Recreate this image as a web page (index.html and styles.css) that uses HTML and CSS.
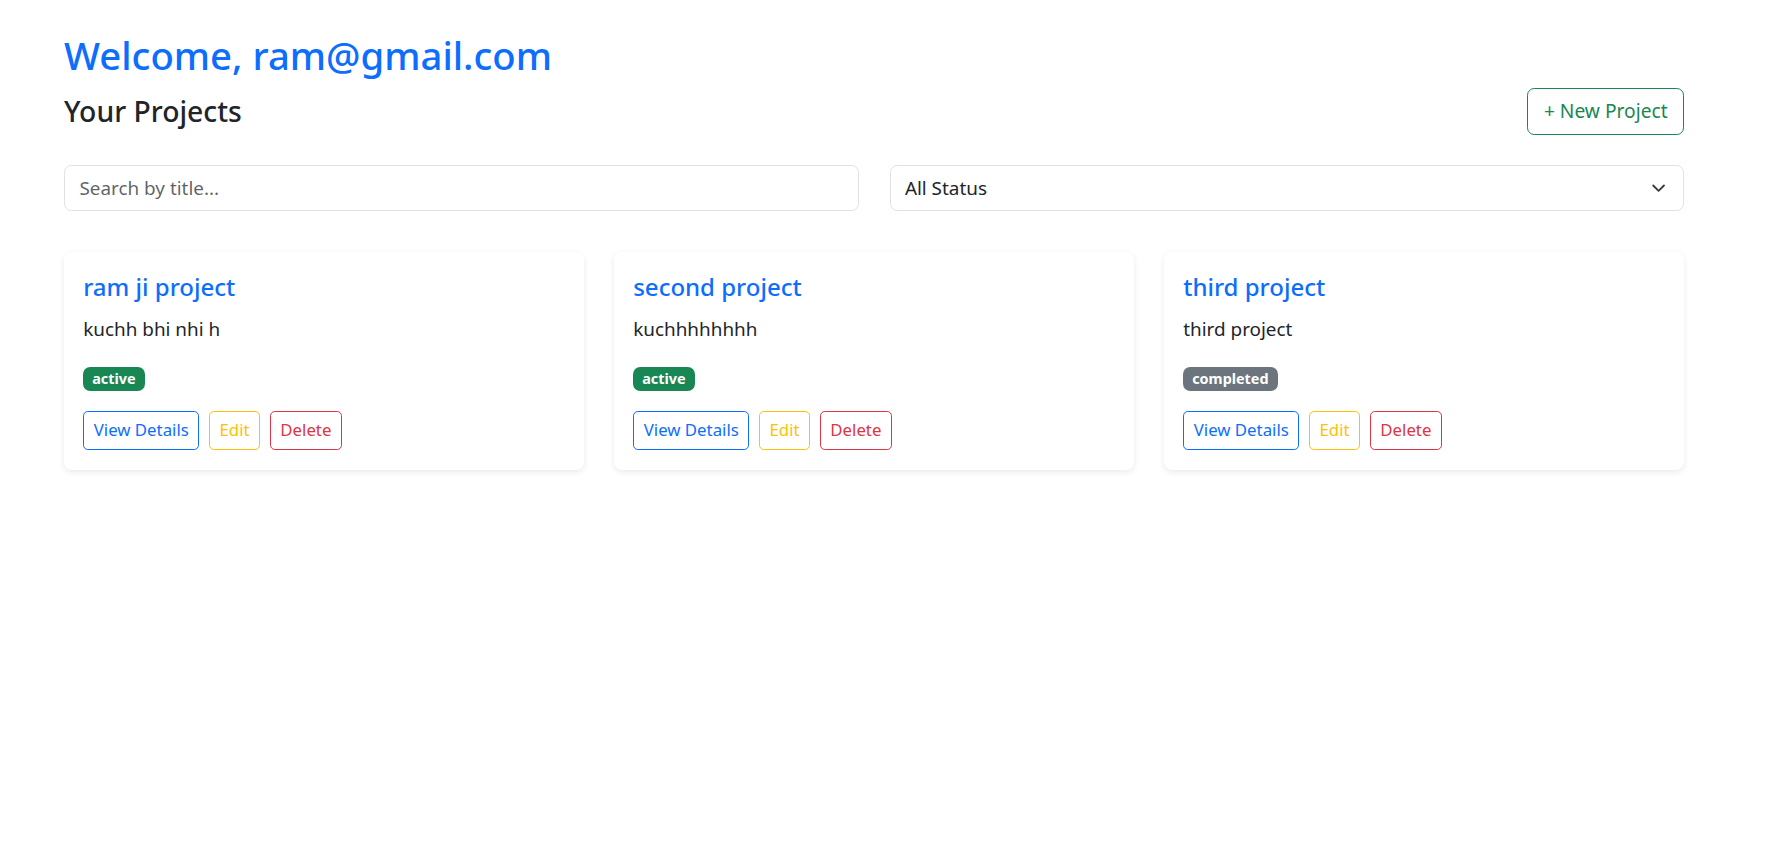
FILE: index.html
```html
<!DOCTYPE html>
<html lang="en">
<head>
<meta charset="utf-8">
<title>Projects</title>
<link rel="stylesheet" href="styles.css">
</head>
<body>
<main class="page">
  <h1 class="welcome">Welcome, ram@gmail.com</h1>
  <div class="header-row">
    <h2 class="section-title">Your Projects</h2>
    <button class="btn btn-outline-success" type="button">+ New Project</button>
  </div>
  <div class="filters">
    <input class="field" type="text" placeholder="Search by title...">
    <div class="select-wrap">
      <select class="field select"><option>All Status</option><option>active</option><option>completed</option></select>
      <svg class="chevron" viewBox="0 0 16 16" aria-hidden="true"><path d="m2 5 6 6 6-6" fill="none" stroke="#343a40" stroke-width="2" stroke-linecap="round" stroke-linejoin="round"/></svg>
    </div>
  </div>
  <div class="cards">
    <div class="card">
      <h5 class="card-title">ram ji project</h5>
      <p class="card-text">kuchh bhi nhi h</p>
      <div class="badge-line"><span class="badge badge-active">active</span></div>
      <div class="actions">
        <button class="btn-sm btn-primary-o" type="button">View Details</button>
        <button class="btn-sm btn-warning-o" type="button">Edit</button>
        <button class="btn-sm btn-danger-o" type="button">Delete</button>
      </div>
    </div>
    <div class="card">
      <h5 class="card-title">second project</h5>
      <p class="card-text">kuchhhhhhhh</p>
      <div class="badge-line"><span class="badge badge-active">active</span></div>
      <div class="actions">
        <button class="btn-sm btn-primary-o" type="button">View Details</button>
        <button class="btn-sm btn-warning-o" type="button">Edit</button>
        <button class="btn-sm btn-danger-o" type="button">Delete</button>
      </div>
    </div>
    <div class="card">
      <h5 class="card-title">third project</h5>
      <p class="card-text">third project</p>
      <div class="badge-line"><span class="badge badge-completed">completed</span></div>
      <div class="actions">
        <button class="btn-sm btn-primary-o" type="button">View Details</button>
        <button class="btn-sm btn-warning-o" type="button">Edit</button>
        <button class="btn-sm btn-danger-o" type="button">Delete</button>
      </div>
    </div>
  </div>
</main>
</body>
</html>
```

FILE: styles.css
```css
* { box-sizing: border-box; }

html, body {
  margin: 0;
  background: #fff;
}

body {
  font-family: "Noto Sans", "Open Sans", sans-serif;
  font-size: 18.9px;
  line-height: 28.8px;
  color: #212529;
}

.page {
  padding: 26.7px 93px 40px 64px;
}

.welcome {
  margin: 0 0 3.8px;
  font-size: 38.3px;
  font-weight: 500;
  line-height: 57.6px;
  color: #0d6efd;
}

.header-row {
  display: flex;
  justify-content: space-between;
  align-items: center;
  height: 46.5px;
}

.section-title {
  margin: 0;
  font-size: 28.3px;
  font-weight: 500;
  line-height: 34.6px;
  color: #212529;
}

.btn {
  font-family: inherit;
  font-size: 19.2px;
  line-height: 28.8px;
  padding: 7.9px 15.4px;
  border-radius: 7.2px;
  background: #fff;
  cursor: pointer;
}

.btn-outline-success {
  color: #198754;
  border: 1px solid #198754;
}

.filters {
  display: grid;
  grid-template-columns: 1fr 1fr;
  gap: 31px;
  margin-top: 30.6px;
}

.field {
  width: 100%;
  height: 45.4px;
  font-family: inherit;
  font-size: 18.9px;
  color: #212529;
  padding: 0 14.4px;
  border: 1px solid #dee2e6;
  border-radius: 7.2px;
  background: #fff;
  outline: none;
}

.field::placeholder {
  color: rgba(33, 37, 41, 0.72);
}

.select-wrap {
  position: relative;
}

.select {
  appearance: none;
  -webkit-appearance: none;
  padding-right: 48px;
}

.chevron {
  position: absolute;
  right: 15.4px;
  top: 15.5px;
  width: 19.2px;
  height: 14.4px;
  pointer-events: none;
}

.cards {
  display: grid;
  grid-template-columns: repeat(3, 1fr);
  gap: 30px;
  margin-top: 41.9px;
}

.card {
  background: #fff;
  border-radius: 8px;
  padding: 20.5px 19.2px 20.5px;
  box-shadow: 0 2px 6px rgba(0, 0, 0, 0.085);
}

.card-title {
  margin: 0 0 12.8px;
  font-size: 24px;
  font-weight: 500;
  line-height: 28.8px;
  color: #0d6efd;
}

.card-text {
  margin: 0 0 21.5px;
}

.badge-line {
  margin-bottom: 17.5px;
  height: 28.8px;
  display: flex;
  align-items: center;
}

.badge {
  display: inline-block;
  font-size: 14.4px;
  font-weight: 700;
  line-height: 14.4px;
  padding: 5px 9px;
  border-radius: 7.2px;
  color: #fff;
}

.badge-active { background: #198754; }
.badge-completed { background: #6c757d; }

.actions {
  display: flex;
  gap: 9.6px;
}

.btn-sm {
  font-family: inherit;
  font-size: 16.8px;
  line-height: 26.6px;
  padding: 5px 9.6px;
  border-radius: 4.8px;
  background: #fff;
  cursor: pointer;
}

.btn-primary-o { color: #0d6efd; border: 1px solid #0d6efd; }
.btn-warning-o { color: #ffc107; border: 1px solid #ffc107; }
.btn-danger-o { color: #dc3545; border: 1px solid #dc3545; }
```
